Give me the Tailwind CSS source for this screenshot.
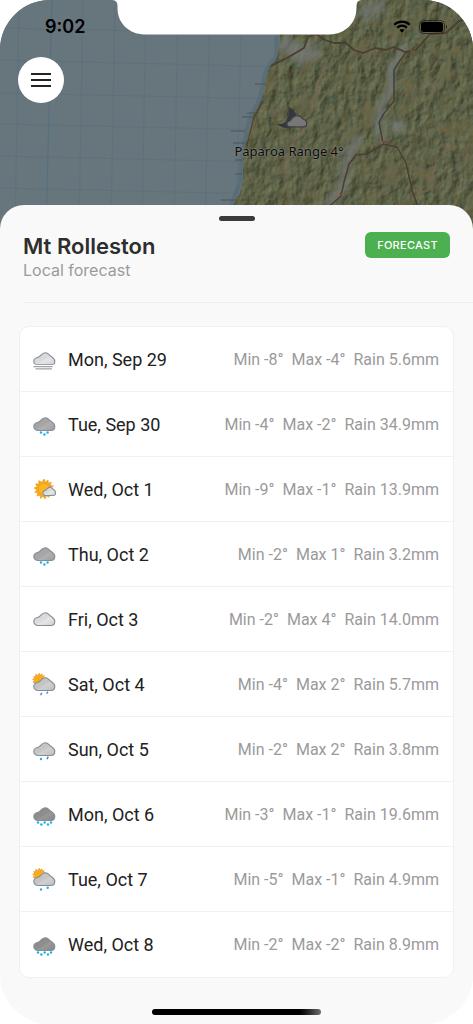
<!DOCTYPE html>
<html lang="en">
<head>
    <meta charset="UTF-8">
    <meta name="viewport" content="width=device-width, initial-scale=1.0">
    <title>Mt Rolleston - Local forecast</title>
    <script src="https://cdn.jsdelivr.net/npm/@tailwindcss/browser@4"></script>
</head>
<body class="bg-white font-['Inter',sans-serif]">
    <!-- Shared weather icon parts -->
    <svg class="absolute w-0 h-0" aria-hidden="true">
        <defs>
            <linearGradient id="light" x1="0" y1="0" x2="1" y2="1">
                <stop offset="0" stop-color="#d2d2d2"/><stop offset=".5" stop-color="#dcdcdc"/><stop offset=".6" stop-color="#e6e6e6"/><stop offset="1" stop-color="#cecece"/>
            </linearGradient>
            <linearGradient id="mid" x1="0" y1="0" x2="1" y2="1">
                <stop offset="0" stop-color="#bdbdbd"/><stop offset=".5" stop-color="#c6c6c6"/><stop offset=".6" stop-color="#d0d0d0"/><stop offset="1" stop-color="#bcbcbc"/>
            </linearGradient>
            <linearGradient id="grey" x1="0" y1="0" x2="1" y2="1">
                <stop offset="0" stop-color="#9f9f9f"/><stop offset=".5" stop-color="#a6a6a6"/><stop offset=".6" stop-color="#b0b0b0"/><stop offset="1" stop-color="#9c9c9c"/>
            </linearGradient>
            <linearGradient id="dark" x1="0" y1="0" x2="1" y2="1">
                <stop offset="0" stop-color="#8a8a8a"/><stop offset=".5" stop-color="#8e8e8e"/><stop offset=".6" stop-color="#989898"/><stop offset="1" stop-color="#868686"/>
            </linearGradient>
            <path id="cloud" d="M6.200 17.500C3.600 17.500 1.800 15.800 1.800 13.500C1.800 11.200 3.600 9.800 6 9.300C8.600 8.700 9.400 4.700 13.200 4.700C16.200 4.700 17 6.900 18.500 8C20.300 9.300 22.800 10 22.800 13.500C22.800 15.900 21.200 17.500 18.800 17.500Z"/>
            <path id="sun" d="M0-10L1.5-7.1L4.1-9.1L4.2-5.9L7.4-6.7L6.2-3.7L9.5-3.1L7.2-.8L10 1.2L6.9 2.2L8.3 5.2L5.1 4.9L5.2 8.3L2.4 6.8L1 9.9L-.9 7.2L-3.4 9.4L-3.8 6.2L-7 7L-6.1 3.9L-9.3 3.3L-7.2.9L-10-1.1L-7-2.2L-8.4-5.2L-5.2-4.9L-5.2-8.4L-2.3-6.8Z"/>
        </defs>
    </svg>

    <div class="relative min-h-screen w-full overflow-hidden rounded-[50px] bg-[#f9f9f9]">
        <header class="relative h-[229px] overflow-hidden bg-[#67757c]">
            <!-- Topo map -->
            <svg class="absolute inset-0 h-full w-full" viewBox="0 0 473 229" preserveAspectRatio="xMidYMin slice" aria-hidden="true">
                <defs>
                    <filter id="relief" x="0" y="0" width="100%" height="100%" color-interpolation-filters="sRGB">
                        <feTurbulence type="fractalNoise" baseFrequency=".11 .07" numOctaves="4" seed="8" result="n"/>
                        <feColorMatrix in="n" type="matrix" values="0 0 0 0 0  0 0 0 0 0  0 0 0 0 0  1 0 0 0 0" result="h"/>
                        <feDiffuseLighting in="h" surfaceScale="2.400" lighting-color="#8f927a" result="l"><feDistantLight azimuth="225" elevation="42"/></feDiffuseLighting>
                        <feTurbulence type="fractalNoise" baseFrequency=".05" numOctaves="4" seed="21"/>
                        <feColorMatrix type="matrix" values="0 0 0 0 .48  0 0 0 0 .42  0 0 0 0 .34  3 0 0 0 -1.5" result="b"/>
                        <feMerge><feMergeNode in="l"/><feMergeNode in="b"/></feMerge>
                        <feComposite operator="in" in2="SourceGraphic"/>
                    </filter>
                    <filter id="wobble" x="-5%" y="-5%" width="110%" height="110%">
                        <feTurbulence type="fractalNoise" baseFrequency=".06" numOctaves="3" seed="4"/>
                        <feDisplacementMap in="SourceGraphic" scale="20" xChannelSelector="R" yChannelSelector="G"/>
                    </filter>
                    <filter id="soft"><feGaussianBlur stdDeviation="3"/></filter>
                    <pattern id="streams" width="26" height="23" patternUnits="userSpaceOnUse" patternTransform="rotate(18)">
                        <path d="M2 2Q8 5 9 11T19 21M9 11Q14 8 15 2M15 18Q21 14 25 15M3 21Q6 17 5 12M20 3Q21 8 25 9" fill="none" stroke="#42625f" stroke-width="1"/>
                    </pattern>
                    <clipPath id="landClip"><path d="M279 0L280 40L278 54L276 60L270 66L267 74L265 86L262 98L258 108L253 115L251 125L247 138L244 150L243 165L243 182L240 193L233 205L228 229H473V0Z"/></clipPath>
                </defs>
                <rect width="473" height="229" fill="#67757c"/>
                <g fill="none" stroke="#526b7b" stroke-opacity=".35" stroke-width="1">
                    <path d="M19 0L15 229M83 0L79 229M115 0L111 229M146 0L142 229M178 0L174 229M210 0L205 229M242 0L236 229"/>
                    <path d="M0 28L290 34M0 60L290 67M0 93L280 99M0 124L270 130M0 156L260 162M0 188L260 194"/>
                    <path d="M52 0L46 229" stroke="#416b84" stroke-opacity=".55"/>
                </g>
                <path d="M277 36L276 57Q265 67 263 84Q260 101 253 112Q247 124 245 140Q240 160 241 181L230 207" fill="none" stroke="#4e6878" stroke-width="4" opacity=".5"/>
                <path d="M255 84h12M247 113h14M242 117h16M231 131h14M233 143h12M235 160h9M235 174h7M221 200h15" stroke="#414e53" stroke-width="1.3" opacity=".5"/>
                <path d="M279 0L280 40L278 54L276 60L270 66L267 74L265 86L262 98L258 108L253 115L251 125L247 138L244 150L243 165L243 182L240 193L233 205L228 229H473V0Z" fill="#61634a" filter="url(#relief)"/>
                <g clip-path="url(#landClip)">
                    <rect x="228" width="245" height="229" fill="#5b5f36" opacity=".45"/>
                    <g filter="url(#wobble)"><rect x="200" y="-20" width="300" height="270" fill="url(#streams)" opacity=".6"/></g>
                    <g fill="none" stroke="#777b7a" filter="url(#soft)" opacity=".75">
                        <path d="M282 40L300 55L318 49" stroke-width="16"/>
                        <path d="M361 17L370 10L384 5" stroke-width="12"/>
                        <path d="M405 44L392 67L392 88L380 106L379 127L386 145" stroke-width="7"/>
                        <path d="M360 135L347 158L342 190L324 208" stroke-width="9"/>
                        <path d="M390 122L404 130" stroke-width="11"/>
                    </g>
                    <g fill="none" stroke="#7b6c56" stroke-width="3" opacity=".55" filter="url(#wobble)">
                        <path d="M327 60L318 83L309 112L300 136L281 172M438 58L430 90L424 109M452 145L431 174L418 193"/>
                    </g>
                    <g fill="none" stroke="#4a3d32" stroke-width="1.500" stroke-linejoin="round">
                        <path d="M271 66L287 58L304 48L308 37L316 34L325 40L334 43L346 43L354 50L363 53L375 48L386 50L394 47L405 52L416 50L430 34L446 33L459 21L473 18" stroke-width="1.800"/>
                        <path d="M407 51L399 62L394 70L394 101L384 113L379 122L383 143M384 144L367 154L356 155L349 164L344 182L341 196L325 210M383 144L397 147L406 163L412 190L419 210"/>
                        <path d="M263 101L254 117L249 137L246 151" stroke-width="1"/>
                    </g>
                    <path d="M382 142h5M410 51h5M340 193l2 3" stroke="#7a4732" stroke-width="2"/>
                    <path d="M391 63L392 90M386 109Q374 119 377 134" fill="none" stroke="#627780" stroke-width="2" opacity=".7"/>
                </g>
            </svg>

            <!-- Notch -->
            <svg class="absolute left-1/2 top-0 h-[35px] w-[251px] -translate-x-1/2" viewBox="0 0 251 35" aria-hidden="true">
                <path d="M0 0C4 0 6 2 6 6V8C6 23 17 34 33 34.500H218C234 34 245 23 245 8V6C245 2 247 0 251 0Z" fill="#fff"/>
            </svg>

            <div class="relative flex h-[57px] items-center justify-between pb-1 pl-[45px] pr-[25px]">
                <time class="text-lg leading-6 font-semibold text-black">9:02</time>
                <div class="flex items-center gap-2">
                    <svg class="mt-2 h-3 w-5" viewBox="0 0 20 12" fill="#454d3c" aria-hidden="true">
                        <circle cx="2" cy="6" r="1.400"/><circle cx="7" cy="6" r="1.400"/><circle cx="12" cy="6" r="1.400"/><circle cx="17" cy="6" r="1.400"/>
                    </svg>
                    <svg class="h-[13px] w-[18px]" viewBox="0 0 18 13" role="img" aria-label="Wi-Fi">
                        <path d="M1.300 4.700C5.800.7 12.200.7 16.700 4.700M4.200 7.700C7.100 5.200 10.900 5.200 13.800 7.700" fill="none" stroke="#000" stroke-width="2.200"/>
                        <path d="M6.300 10C7.800 8.600 10.200 8.600 11.700 10L9 12.800Z"/>
                    </svg>
                    <svg class="h-[14px] w-[29px]" viewBox="0 0 29 14" role="img" aria-label="Battery full">
                        <rect x=".5" y=".5" width="25" height="13" rx="4" fill="none" stroke="#2b2e24"/>
                        <rect x="2" y="2" width="22" height="10" rx="2.500"/>
                        <path d="M27 4.800C28.400 5.300 28.400 8.700 27 9.200Z" fill="#2b2e24"/>
                    </svg>
                </div>
            </div>
            <button type="button" aria-label="Menu" class="relative ml-[18px] flex size-[46px] items-center justify-center rounded-full bg-white">
                <svg class="h-4 w-5" viewBox="0 0 20 16" stroke="#262223" stroke-width="2" aria-hidden="true"><path d="M0 2H20M0 8H20M0 14H20"/></svg>
            </button>

            <!-- Map marker -->
            <div class="absolute left-[289px] top-[106px] flex -translate-x-1/2 flex-col items-center">
                <svg class="ml-1.5 h-[23px] w-8" viewBox="0 0 32 23" aria-hidden="true">
                    <path d="M12 1C20 4 22 12 19 18C16 23 6 23.500 1 18C5 18.500 9 17.500 11 13C12.800 9 13.200 5 12 1Z" fill="#34373c"/>
                    <path d="M13.500 20.800C9.600 20.800 9.400 16 13 15.200C14.500 14.800 15.600 10 20.500 9.600C24.200 9.300 25.200 11.200 26.500 13C31.500 14.500 31.500 20.800 27 20.800Z" fill="#777777" stroke="#3f4245" stroke-width="1.200"/>
                </svg>
                <span class="mt-3 whitespace-nowrap font-['Noto_Sans',sans-serif] text-[13px] leading-5 text-[#0b0b0b] [text-shadow:0_0_2px_#88897d,0_0_2px_#88897d]">Paparoa Range 4°</span>
            </div>
        </header>

        <main class="relative -mt-6 rounded-t-3xl bg-[#f9f9f9] pt-[11px] pb-[9px]">
            <div class="mx-auto h-[5px] w-9 rounded-full bg-[#3b3b3b]"></div>
            <div class="ml-[23px] flex items-start justify-between border-b border-[#eeeeee] pt-[11px] pr-[23px] pb-[22px]">
                <div>
                    <h1 class="text-[22px] leading-7 font-semibold text-[#2e2e2e]">Mt Rolleston</h1>
                    <p class="text-base leading-5 text-[#9b9b9b]">Local forecast</p>
                </div>
                <button type="button" class="h-[26px] w-[85px] rounded-md bg-[#4caf50] text-[11px] font-medium tracking-wide text-white">FORECAST</button>
            </div>

            <ul id="forecastList" class="mx-[19px] mt-[23px] divide-y divide-[#f1f1f1] rounded-[10px] border border-[#f0f0f0] bg-white font-['Roboto',sans-serif]"></ul>

            <div class="mx-auto mt-[31px] h-1.5 w-[169px] rounded-full bg-linear-to-r from-black from-85% to-[#707070]"></div>
        </main>
    </div>

    <script>
        const cloud = (fill) => `<use href="#cloud" fill="url(#${fill})" stroke="#858c97" stroke-width="1.1"/>`;
        const dots = (points) => points.map(([x, y]) => `<circle cx="${x}" cy="${y}" r="1.2" fill="#1fb0e6"/>`).join('');
        const sun = '<use href="#sun" transform="translate(7.3 7) scale(.68)" fill="#f9ab1c" stroke="#d98e18" stroke-width=".7"/>';
        const heavyDots = dots([[6, 19.5], [9.4, 21.5], [12.7, 19.5], [16, 21.5], [19, 19.5]]);

        const icons = {
            fog: cloud('light') + '<path d="M0 16.200H24V24H0Z" fill="#fff"/><path d="M3.200 16.500H21.800M1.500 18.700H20.500M3.500 20.900H20" stroke="#9ca2a9" stroke-width="1.200"/>',
            snow: cloud('grey') + dots([[9, 19.5], [12.4, 21.5], [15.6, 19.5]]),
            partly: '<use href="#sun" transform="translate(12 11)" fill="#f9ab1c" stroke="#d98e18" stroke-width=".5"/><circle cx="12" cy="11" r="5.600" fill="#fdb622" stroke="#e39a1a" stroke-width=".6"/><use href="#cloud" transform="translate(9.8 6) scale(.61 .66)" fill="url(#light)" stroke="#858c97" stroke-width="1.600"/>',
            cloudy: cloud('light'),
            sunShowers: sun + cloud('mid') + '<path d="M9.700 19.800L8.600 22.200M15.800 18.600L14.700 20.800" stroke="#3d8ee0" stroke-width="1.400"/>',
            sleet: cloud('mid') + dots([[9, 21]]) + '<path d="M16.200 18.600L15 21.200" stroke="#3d7fe0" stroke-width="1.400"/>',
            heavySnow: cloud('dark') + heavyDots,
            sunSnow: sun + cloud('mid') + dots([[9, 21.5], [15.7, 19.7]])
        };

        const forecast = [
            { day: 'Mon, Sep 29', icon: 'fog', min: -8, max: -4, rain: '5.6' },
            { day: 'Tue, Sep 30', icon: 'snow', min: -4, max: -2, rain: '34.9' },
            { day: 'Wed, Oct 1', icon: 'partly', min: -9, max: -1, rain: '13.9' },
            { day: 'Thu, Oct 2', icon: 'snow', min: -2, max: 1, rain: '3.2' },
            { day: 'Fri, Oct 3', icon: 'cloudy', min: -2, max: 4, rain: '14.0' },
            { day: 'Sat, Oct 4', icon: 'sunShowers', min: -4, max: 2, rain: '5.7' },
            { day: 'Sun, Oct 5', icon: 'sleet', min: -2, max: 2, rain: '3.8' },
            { day: 'Mon, Oct 6', icon: 'heavySnow', min: -3, max: -1, rain: '19.6' },
            { day: 'Tue, Oct 7', icon: 'sunSnow', min: -5, max: -1, rain: '4.9' },
            { day: 'Wed, Oct 8', icon: 'heavySnow', min: -2, max: -2, rain: '8.9' }
        ];

        document.getElementById('forecastList').innerHTML = forecast.map((f) => `
            <li class="flex h-[65px] items-center pt-px pl-3 pr-[14px]">
                <svg class="mr-3 size-6 shrink-0" viewBox="0 0 24 24" aria-hidden="true">${icons[f.icon]}</svg>
                <span class="text-lg leading-6 text-[#212121]">${f.day}</span>
                <span class="ml-auto flex gap-2 text-base leading-6 whitespace-nowrap text-[#9a9a9a]">
                    <span>Min ${f.min}°</span><span>Max ${f.max}°</span><span>Rain ${f.rain}mm</span>
                </span>
            </li>`).join('');
    </script>
</body>
</html>
